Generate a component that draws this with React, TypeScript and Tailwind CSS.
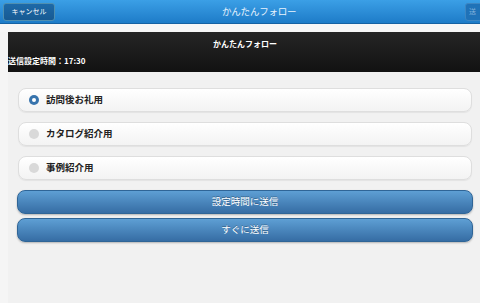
import React, { useState } from 'react'

const options = ['訪問後お礼用', 'カタログ紹介用', '事例紹介用']

function App() {
  const [selected, setSelected] = useState(0)

  return (
    <div
      className="w-[480px] h-[303px] overflow-hidden bg-[#f1f1f1] flex flex-col"
      style={{ fontFamily: '"Noto Sans CJK JP", "Noto Sans", sans-serif' }}
    >
      {/* header */}
      <div className="h-[24px] shrink-0 flex items-center bg-gradient-to-b from-[#3b9fe6] to-[#1d7cc8] border-b border-[#1562a3] relative">
        <button className="ml-[3px] w-[52px] h-[18px] rounded-[3px] bg-gradient-to-b from-[#1d69a8] to-[#175a93] border border-[#4f8fb0] text-white text-[7px] leading-none flex items-center justify-center">
          キャンセル
        </button>
        <div className="ml-[167px] text-[#e8f3fd] text-[9.5px] leading-none tracking-[-0.2px]">かんたんフォロー</div>
        <div className="flex-1" />
        <button className="w-[22px] h-[18px] -mr-[7px] rounded-[3px] bg-[#1f72b8] border border-[#3d86c2] text-[#7fb0da] text-[7px] leading-none flex items-center pl-[3px]">
          送
        </button>
      </div>

      <div className="flex flex-1">
        <div className="w-[8px] shrink-0 bg-[#f5f5f5]" />
        <div className="flex-1 flex flex-col">
          <div className="h-[8px] bg-[#f7f7f7] -ml-[8px]" />
          {/* black bar */}
          <div className="h-[40px] bg-gradient-to-b from-[#262626] to-[#121212] text-white font-bold flex flex-col">
            <div className="text-[8px] leading-none text-center mt-[8px] pl-[2px]">かんたんフォロー</div>
            <div className="text-[8px] leading-none mt-[9px]">送信設定時間：17:30</div>
          </div>

          {/* options */}
          <div className="flex flex-col gap-[10px] pl-[10px] pr-[8px] mt-[16px]">
            {options.map((o, i) => (
              <div
                key={o}
                onClick={() => setSelected(i)}
                className="h-[24px] rounded-[8px] border border-[#dedede] bg-gradient-to-b from-[#ffffff] to-[#f3f3f3] shadow-[0_1px_1px_rgba(0,0,0,0.06)] flex items-center"
              >
                {selected === i ? (
                  <span className="ml-[10px] w-[10px] h-[10px] rounded-full bg-[#3874ad] flex items-center justify-center">
                    <span className="w-[4px] h-[4px] rounded-full bg-white" />
                  </span>
                ) : (
                  <span className="ml-[10px] w-[10px] h-[10px] rounded-full bg-[#d9d9d9]" />
                )}
                <span className="ml-[7px] text-[9.5px] leading-none font-bold text-[#222]">{o}</span>
              </div>
            ))}
          </div>

          {/* buttons */}
          <div className="flex flex-col gap-[4px] pl-[9px] pr-[7px] mt-[10px]">
            <button className="h-[24px] rounded-[8px] border border-[#2f6597] bg-gradient-to-b from-[#5e9fd4] to-[#366da4] text-white text-[9.5px] leading-none shadow-[0_1px_2px_rgba(0,0,0,0.25)] [text-shadow:0_-1px_0_rgba(0,0,0,0.3)]">
              設定時間に送信
            </button>
            <button className="h-[24px] rounded-[8px] border border-[#2f6597] bg-gradient-to-b from-[#5e9fd4] to-[#366da4] text-white text-[9.5px] leading-none shadow-[0_1px_2px_rgba(0,0,0,0.25)] [text-shadow:0_-1px_0_rgba(0,0,0,0.3)]">
              すぐに送信
            </button>
          </div>
        </div>
      </div>
    </div>
  )
}

export default App
